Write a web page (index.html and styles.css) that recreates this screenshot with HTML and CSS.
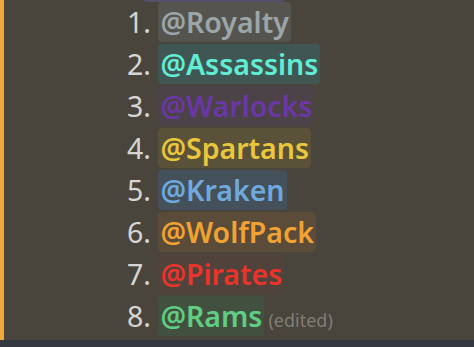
FILE: index.html
```html
<!DOCTYPE html>
<html lang="en">
<head>
    <meta charset="UTF-8">
    <title>Teams</title>
    <link rel="stylesheet" href="styles.css">
</head>
<body>
    <div class="message">
        <div class="bar"></div>
        <div class="content">
            <div class="prev"><span class="prev-pill"></span></div>
            <ol class="teams">
                <li><span class="num">1.</span> <span class="mention royalty">@Royalty</span></li>
                <li><span class="num">2.</span> <span class="mention assassins">@Assassins</span></li>
                <li><span class="num">3.</span> <span class="mention warlocks">@Warlocks</span></li>
                <li><span class="num">4.</span> <span class="mention spartans">@Spartans</span></li>
                <li><span class="num">5.</span> <span class="mention kraken">@Kraken</span></li>
                <li><span class="num">6.</span> <span class="mention wolfpack">@WolfPack</span></li>
                <li><span class="num">7.</span> <span class="mention pirates">@Pirates</span></li>
                <li><span class="num">8.</span> <span class="mention rams">@Rams</span><span class="edited">(edited)</span></li>
            </ol>
        </div>
    </div>
    <div class="footer"></div>
</body>
</html>
```

FILE: styles.css
```css
body {
    margin: 0;
    padding: 0;
    background-color: #36393f;
    font-family: "Noto Sans", "Open Sans", sans-serif;
    width: 474px;
    height: 347px;
    overflow: hidden;
}

.message {
    display: flex;
    height: 340px;
    background-color: #49453c;
}

.bar {
    width: 4px;
    background-color: #f1a836;
}

.content {
    flex: 1;
    padding-left: 123px;
}

.prev {
    height: 0;
    position: relative;
}

.prev-pill {
    position: absolute;
    top: -6px;
    left: 16px;
    width: 142px;
    height: 8px;
    border-radius: 4px;
    background-color: #55506a;
}

.teams {
    list-style: none;
    margin: 0;
    padding: 1px 0 0 0;
}

.teams li {
    height: 42px;
    line-height: 42px;
    font-size: 28.5px;
    white-space: nowrap;
}

.num {
    color: #d6d6d4;
}

.mention {
    font-weight: 600;
    padding: 1px 2px;
    border-radius: 4px;
}

.royalty {
    color: #9aa6a9;
    background-color: #56544e;
}

.assassins {
    color: #62ecd4;
    background-color: #3f5652;
}

.warlocks {
    color: #6b37a6;
    background-color: #4b4347;
}

.spartans {
    color: #eac63c;
    background-color: #5a5238;
}

.kraken {
    color: #6fa9de;
    background-color: #44505a;
}

.wolfpack {
    color: #f2a233;
    background-color: #5a4c39;
}

.pirates {
    color: #ea342b;
    background-color: #4f433b;
}

.rams {
    color: #5fcd82;
    background-color: #42513f;
}

.edited {
    color: #807d76;
    font-size: 18px;
    margin-left: 4px;
}

.footer {
    height: 7px;
    background-color: #343840;
}
```
